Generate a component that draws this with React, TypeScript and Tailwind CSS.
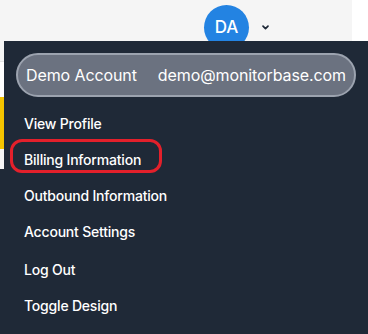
import React from "react";

export default function App() {
  const items = [
    { label: "View Profile", extra: "" },
    { label: "Billing Information", extra: "" },
    { label: "Outbound Information", extra: "" },
    { label: "Account Settings", extra: "" },
    { label: "Log Out", extra: "mt-[2px]" },
    { label: "Toggle Design", extra: "" },
  ];
  return (
    <div
      className="relative w-[368px] h-[334px] overflow-hidden bg-white"
      style={{ fontFamily: "Inter, 'Liberation Sans', sans-serif" }}
    >
      {/* page behind */}
      <div className="flex flex-col w-[352px]">
        <div className="h-[62px] bg-[#f5f5f5] border-b border-[#e5e5e5] flex items-start">
          <div className="ml-[204px] mt-[5px] w-[45px] h-[45px] rounded-full bg-[#2383e2] flex items-center justify-center text-white text-[17px] font-medium">
            DA
          </div>
          <svg className="ml-[12px] mt-[24px]" width="9" height="7" viewBox="0 0 9 7" fill="none">
            <path d="M2 2.2 L4.5 4.7 L7 2.2" stroke="#1e2837" strokeWidth="1.7" strokeLinecap="round" strokeLinejoin="round" />
          </svg>
        </div>
        <div className="h-[35px] bg-white" />
        <div className="h-[52px] w-[8px] bg-[#f5c400]" />
        <div className="h-[20px] bg-[#f5f5f5]" />
        <div className="h-[200px] bg-[#1f2937]" />
      </div>

      {/* dropdown menu */}
      <div className="absolute left-[4px] top-[41px] right-0 bottom-0 bg-[#1f2937]">
        <div className="ml-[12px] mt-[12px] w-[340px] h-[44px] rounded-full bg-[#6b7280] border-2 border-[#9ca3af] flex items-center justify-between pl-[8px] pr-[8px] text-white text-[16px] whitespace-nowrap tracking-[-0.1px]">
          <span>Demo Account</span>
          <span>demo@monitorbase.com</span>
        </div>
        <div className="mt-[8px] flex flex-col">
          {items.map((it) => (
            <div
              key={it.label}
              className={`h-[36px] flex items-center pl-[20px] text-white text-[14px] font-medium tracking-[-0.2px] whitespace-nowrap ${it.extra}`}
            >
              {it.label}
            </div>
          ))}
        </div>
        <div className="absolute left-[6px] top-[98px] w-[152px] h-[34px] rounded-[12px] border-[3px] border-[#e3202b]" />
      </div>
    </div>
  );
}
